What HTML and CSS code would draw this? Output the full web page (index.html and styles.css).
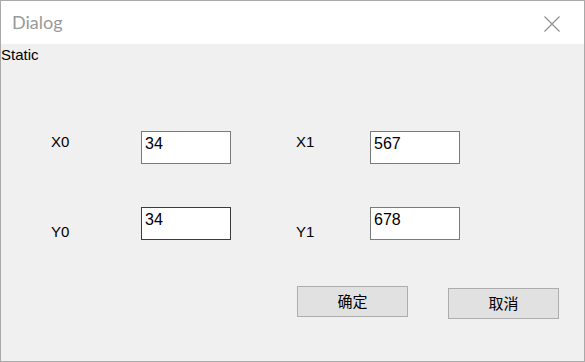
FILE: index.html
```html
<!DOCTYPE html>
<html>
<head>
    <meta charset="UTF-8">
    <title>Dialog</title>
    <link rel="stylesheet" href="styles.css">
</head>
<body>

<div class="window">
    <div class="titlebar">
        <div class="title">Dialog</div>
        <div class="close-btn">
            <svg width="16" height="16" viewBox="0 0 16 16">
                <path d="M0.5 0.5 L15.5 15.5 M15.5 0.5 L0.5 15.5" stroke="#8c8c8c" stroke-width="1.1" fill="none"/>
            </svg>
        </div>
    </div>

    <div class="client">
        <div class="static">Static</div>

        <div class="form">
            <div class="lbl lbl-top">X0</div>
            <div class="edit">34</div>
            <div></div>
            <div class="lbl lbl-top">X1</div>
            <div class="edit">567</div>

            <div class="lbl lbl-low">Y0</div>
            <div class="edit focus">34</div>
            <div></div>
            <div class="lbl lbl-low">Y1</div>
            <div class="edit">678</div>
        </div>

        <div class="buttons">
            <div class="btn">确定</div>
            <div class="btn btn-low">取消</div>
        </div>
    </div>
</div>

</body>
</html>
```

FILE: styles.css
```css
html, body {
    margin: 0;
    padding: 0;
    height: 100%;
    overflow: hidden;
    user-select: none;
    background: #f0f0f0;
}

.window {
    box-sizing: border-box;
    width: 585px;
    height: 362px;
    border: 1px solid #a9a9a9;
    display: flex;
    flex-direction: column;
    background: #f0f0f0;
}

.titlebar {
    height: 43px;
    background: #ffffff;
    display: flex;
    align-items: flex-start;
    justify-content: space-between;
}

.title {
    font-family: Lato, "Liberation Sans", sans-serif;
    font-size: 18px;
    color: #999999;
    padding: 10px 0 0 11px;
}

.close-btn {
    padding: 15px 24px 0 0;
}

.client {
    flex: 1;
    font-family: "Liberation Sans", Arial, sans-serif;
    color: #000000;
}

.static {
    font-size: 15px;
    padding: 2px 0 0 0;
    height: 17px;
}

.form {
    display: grid;
    grid-template-columns: 90px 90px 65px 74px 90px;
    grid-template-rows: 33px 33px;
    row-gap: 43px;
    padding: 68px 0 0 50px;
}

.lbl {
    font-size: 15px;
}

.lbl-top {
    padding-top: 2px;
}

.lbl-low {
    padding-top: 16px;
}

.edit {
    box-sizing: border-box;
    height: 33px;
    background: #ffffff;
    border: 1px solid #7a7a7a;
    font-size: 16px;
    padding: 3px 0 0 3px;
}

.edit.focus {
    border-color: #3c3c3c;
}

.buttons {
    display: flex;
    align-items: flex-start;
    gap: 40px;
    padding: 46px 0 0 296px;
}

.btn {
    box-sizing: border-box;
    width: 111px;
    height: 31px;
    background: #e1e1e1;
    border: 1px solid #adadad;
    font-family: "Noto Sans CJK SC", sans-serif;
    font-size: 15px;
    line-height: 28px;
    text-align: center;
}

.btn-low {
    margin-top: 2px;
}
```
